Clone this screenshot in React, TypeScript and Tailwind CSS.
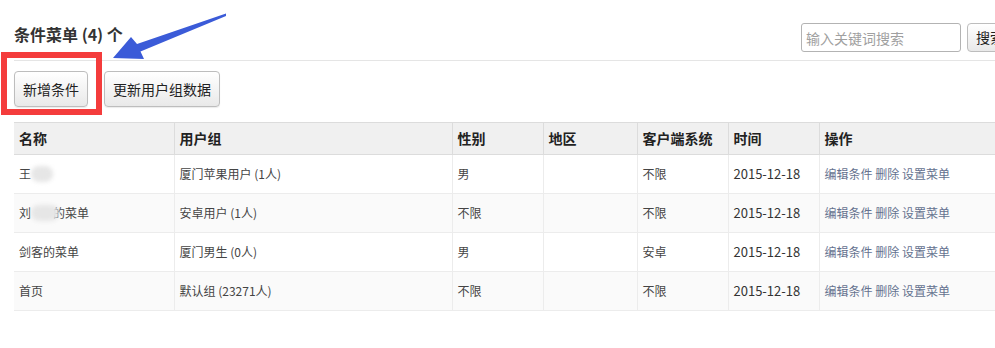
import React from "react";

const FONT = '"Noto Sans CJK SC", "Noto Sans", sans-serif';

function Blob({ w }: { w: number }) {
  return (
    <span
      className="inline-block align-middle h-[16px] rounded-full bg-[#e6e6e6] blur-[2px]"
      style={{ width: w }}
    />
  );
}

const rows = [
  {
    name: (
      <span className="inline-flex items-center">
        王<Blob w={22} />
      </span>
    ),
    group: "厦门苹果用户 (1人)",
    sex: "男",
    region: "",
    os: "不限",
  },
  {
    name: (
      <span className="inline-flex items-center">
        刘<Blob w={28} />
        <span className="-ml-[6px]">的菜单</span>
      </span>
    ),
    group: "安卓用户 (1人)",
    sex: "不限",
    region: "",
    os: "不限",
  },
  {
    name: <span>剑客的菜单</span>,
    group: "厦门男生 (0人)",
    sex: "男",
    region: "",
    os: "安卓",
  },
  {
    name: <span>首页</span>,
    group: "默认组 (23271人)",
    sex: "不限",
    region: "",
    os: "不限",
  },
];

const btn =
  "h-[36px] px-[8px] rounded-[4px] border border-[#bdbdbd] bg-gradient-to-b from-white to-[#e9e9e9] text-[14px] text-[#222] shadow-[0_1px_1px_rgba(0,0,0,0.08)]";

export default function App() {
  return (
    <div
      className="relative w-[995px] h-[348px] overflow-hidden bg-white"
      style={{ fontFamily: FONT }}
    >
      <div className="w-[1027px] pl-[14px] pr-[14px]">
        <div className="flex justify-between h-[61px] border-b border-[#e5e5e5]">
          <h1 className="mt-[24px] text-[16px] leading-[20px] font-bold text-[#333]">
            条件菜单 (4) 个
          </h1>
          <div className="flex items-start mt-[23px] gap-[6px]">
            <input
              placeholder="输入关键词搜索"
              className="w-[160px] h-[29px] rounded-[3px] border border-[#b3b3b3] px-[4px] text-[14px] placeholder:text-[#a0a0a0] outline-none"
            />
            <button className="h-[29px] px-[8px] rounded-[4px] border border-[#bdbdbd] bg-gradient-to-b from-white to-[#e9e9e9] text-[14px] text-[#222]">
              搜索
            </button>
          </div>
        </div>

        <div className="flex gap-[16px] mt-[10px]">
          <button className={btn + " w-[74px]"}>新增条件</button>
          <button className={btn + " w-[116px]"}>更新用户组数据</button>
        </div>

        <table className="mt-[15px] border-collapse table-fixed w-[999px]">
          <colgroup>
            <col className="w-[160px]" />
            <col className="w-[278px]" />
            <col className="w-[91px]" />
            <col className="w-[94px]" />
            <col className="w-[91px]" />
            <col className="w-[91px]" />
            <col />
          </colgroup>
          <thead>
            <tr className="h-[32px] bg-[#f0f0f0] border-t border-b border-[#dcdcdc]">
              {["名称", "用户组", "性别", "地区", "客户端系统", "时间", "操作"].map(
                (h, i) => (
                  <th
                    key={h}
                    className={
                      "text-left font-bold text-[14px] text-[#222] px-[5px] py-0 " +
                      (i > 0 ? "border-l border-[#dcdcdc]" : "")
                    }
                  >
                    {h}
                  </th>
                )
              )}
            </tr>
          </thead>
          <tbody>
            {rows.map((r, idx) => (
              <tr
                key={idx}
                className={
                  "h-[39px] border-b border-[#ececec] text-[12px] text-[#444] " +
                  (idx % 2 === 1 ? "bg-[#fafafa]" : "bg-white")
                }
              >
                <td className="px-[5px]">{r.name}</td>
                <td className="px-[5px] border-l border-[#ececec]">{r.group}</td>
                <td className="px-[5px] border-l border-[#ececec]">{r.sex}</td>
                <td className="px-[5px] border-l border-[#ececec]">{r.region}</td>
                <td className="px-[5px] border-l border-[#ececec]">{r.os}</td>
                <td className="px-[5px] border-l border-[#ececec] text-[13px] text-[#333]">
                  2015-12-18
                </td>
                <td className="px-[5px] border-l border-[#ececec] text-[#65728f]">
                  <a className="cursor-pointer">编辑条件</a>{" "}
                  <a className="cursor-pointer">删除</a>{" "}
                  <a className="cursor-pointer">设置菜单</a>
                </td>
              </tr>
            ))}
          </tbody>
        </table>
      </div>

      {/* red highlight box */}
      <div className="absolute left-[1px] top-[52px] w-[101px] h-[63px] border-[6px] border-[#f43c3c]" />

      {/* blue arrow */}
      <svg
        className="absolute left-0 top-0"
        width="260"
        height="80"
        viewBox="0 0 260 80"
      >
        <polygon
          points="113,58 144,59 140.5,51.5 226,16 226,13.5 137,44 131,37"
          fill="#3b5bd8"
        />
      </svg>
    </div>
  );
}
